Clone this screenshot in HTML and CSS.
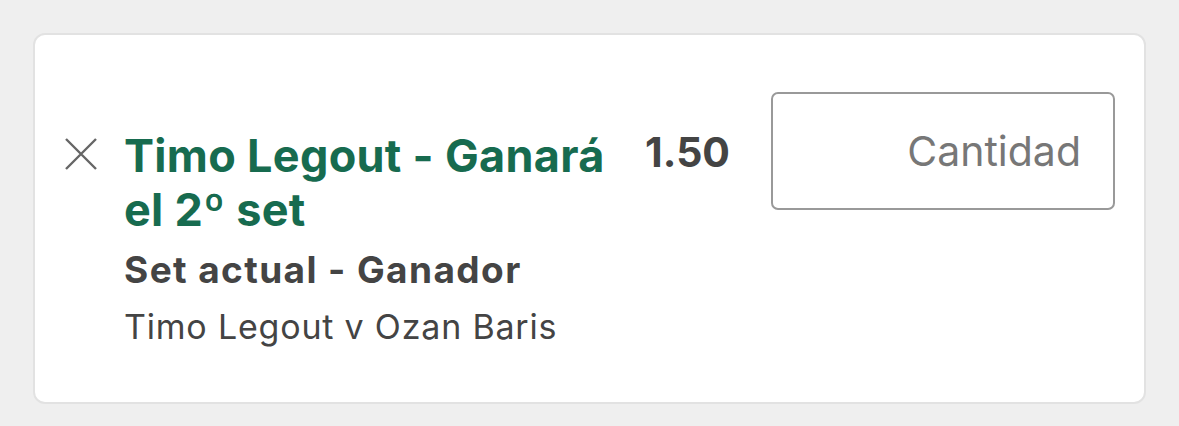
FILE: index.html
```html
<!DOCTYPE html>
<html lang="es">
<head>
  <meta charset="UTF-8" />
  <meta name="viewport" content="width=device-width, initial-scale=1.0"/>
  <title>Boleto</title>
  <link rel="stylesheet" href="styles.css">
</head>
<body>
  <div class="bet-card">
    <button class="remove-button" aria-label="Quitar">
      <svg viewBox="0 0 34 34" width="34" height="34">
        <path d="M2 2 L32 32 M32 2 L2 32" stroke="#666" stroke-width="2.4" fill="none"/>
      </svg>
    </button>

    <div class="selection">
      <div class="selection-name">Timo Legout - Ganará el 2º set</div>
      <div class="market">Set actual - Ganador</div>
      <div class="event">Timo Legout v Ozan Baris</div>
    </div>

    <div class="odds">1.50</div>

    <input class="stake" type="text" placeholder="Cantidad">
  </div>
</body>
</html>
```

FILE: styles.css
```css
* {
  box-sizing: border-box;
  margin: 0;
  padding: 0;
}

body {
  font-family: Inter, Roboto, sans-serif;
  background: #efefef;
  padding: 33px 33px 0 33px;
}

.bet-card {
  display: flex;
  align-items: flex-start;
  background: #fff;
  border: 2px solid #e2e2e2;
  border-radius: 12px;
  padding: 57px 29px 47px 29px;
  width: 1113px;
}

.remove-button {
  background: none;
  border: none;
  width: 34px;
  height: 34px;
  margin-top: 45px;
  margin-right: 26px;
  cursor: pointer;
}

.remove-button svg {
  display: block;
}

.selection {
  flex: 1;
  margin-top: 37px;
}

.selection-name {
  font-size: 45px;
  line-height: 54px;
  letter-spacing: 0.3px;
  font-weight: bold;
  color: #176b4f;
  max-width: 515px;
}

.market {
  font-size: 37px;
  line-height: 56px;
  letter-spacing: 1.4px;
  font-weight: bold;
  color: #444;
  margin-top: 5px;
}

.event {
  font-size: 34px;
  line-height: 56px;
  letter-spacing: 0.8px;
  color: #444;
  margin-top: 1px;
}

.odds {
  font-size: 41px;
  line-height: 54px;
  font-weight: bold;
  color: #444;
  margin-top: 33px;
  margin-right: 41px;
}

.stake {
  width: 344px;
  height: 118px;
  border: 2px solid #999;
  border-radius: 7px;
  padding: 0 32px;
  font-family: Inter, Roboto, sans-serif;
  font-size: 41px;
  text-align: right;
  color: #444;
  outline: none;
}

.stake::placeholder {
  color: #777;
}
```
